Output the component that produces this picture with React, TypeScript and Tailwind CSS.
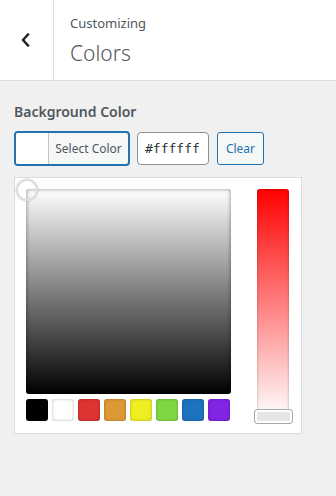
import React from "react";

const swatches = ["#000000", "#ffffff", "#dd3333", "#dd9933", "#eeee22", "#81d742", "#1e73be", "#8224e3"];

export default function App() {
  return (
    <div className="w-[336px] h-[496px] bg-[#f0f0f1] overflow-hidden" style={{ fontFamily: '"Noto Sans", "Open Sans", sans-serif' }}>
      <div className="flex h-[81px] bg-white border-b border-[#dcdcde]">
        <div className="w-[54px] border-r border-[#dcdcde] flex items-center justify-center">
          <svg width="12" height="14" viewBox="0 0 12 14" className="mr-[2px]">
            <path d="M8 1.5 L3 7 L8 12.5" fill="none" stroke="#1d2327" strokeWidth="2.4" strokeLinecap="square" />
          </svg>
        </div>
        <div className="pl-[16px] pt-[13px] flex flex-col">
          <span className="text-[13px] leading-[20px] text-[#50575e]">Customizing</span>
          <span className="text-[21px] leading-[28px] mt-[6px] font-light text-[#50575e]">Colors</span>
        </div>
      </div>
      <div className="px-[14px] pt-[21px]">
        <div className="text-[14px] leading-[20px] font-semibold text-[#50575e]">Background Color</div>
        <div className="flex items-center mt-[9px] gap-[7px]">
          <div className="flex w-[116px] h-[35px] border-2 border-[#2271b1] rounded-[4px] overflow-hidden bg-[#f6f7f7]">
            <div className="w-[33px] bg-white border-r border-[#c3c4c7]"></div>
            <div className="flex-1 flex items-center justify-center text-[12px] text-[#50575e]">Select Color</div>
          </div>
          <div className="w-[72px] h-[33px] border border-[#8c8f94] rounded-[4px] bg-white flex items-center pl-[7px] text-[13px] text-[#2c3338]" style={{ fontFamily: '"DejaVu Sans Mono", monospace' }}>#ffffff</div>
          <div className="w-[47px] h-[33px] ml-[1px] border border-[#2271b1] rounded-[3px] bg-[#f6f7f7] flex items-center justify-center text-[12px] text-[#2271b1]">Clear</div>
        </div>
        <div className="relative mt-[11px] w-[288px] h-[257px] bg-white border border-[#dcdcde] flex pl-[11px] pt-[11px]">
          <div className="flex flex-col">
            <div
              className="w-[205px] h-[205px] rounded-[3px] shadow-[inset_0_0_4px_rgba(0,0,0,0.45)]"
              style={{ background: "linear-gradient(to bottom, #ffffff 0%, #000000 100%)" }}
            ></div>
            <div className="flex gap-[4px] mt-[5px]">
              {swatches.map((c) => (
                <div key={c} className="w-[22px] h-[22px] rounded-[3px] shadow-[inset_0_0_3px_rgba(0,0,0,0.3)]" style={{ background: c }}></div>
              ))}
            </div>
          </div>
          <div className="ml-[26px] flex flex-col">
            <div
              className="w-[32px] h-[230px] rounded-[3px] shadow-[inset_0_0_3px_rgba(0,0,0,0.3)]"
              style={{ background: "linear-gradient(to bottom, #ff0000 0%, #ffffff 100%)" }}
            ></div>
          </div>
          <div className="absolute left-[1px] top-[1px] w-[22px] h-[22px] rounded-full border-2 border-[#dddddd] bg-transparent shadow-[0_0_0_1px_rgba(0,0,0,0.08)]"></div>
          <div className="absolute left-[240px] top-[232px] w-[37px] h-[13px] rounded-[3px] border-2 border-white bg-[#e6e6e6] shadow-[0_0_0_1px_#aaaaaa]"></div>
        </div>
      </div>
    </div>
  );
}
